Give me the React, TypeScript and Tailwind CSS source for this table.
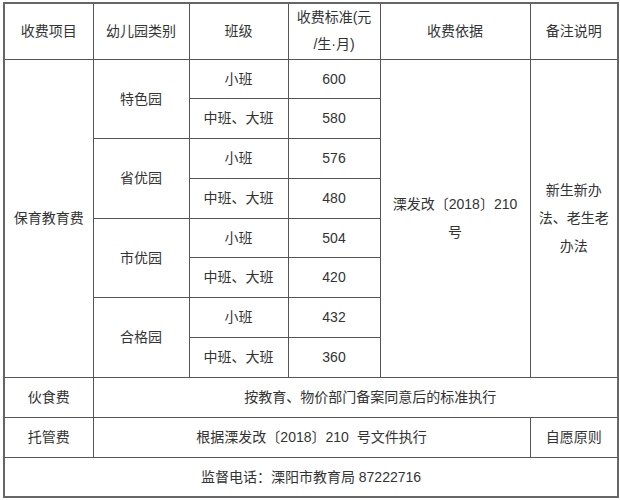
import React from 'react';

const groups = [
  { name: '特色园', small: '600', big: '580' },
  { name: '省优园', small: '576', big: '480' },
  { name: '市优园', small: '504', big: '420' },
  { name: '合格园', small: '432', big: '360' },
];

const cell = 'border border-[#555] text-center align-middle px-2';

export default function App() {
  return (
    <div className="w-[620px] h-[500px] bg-white pl-[3px] pt-[2px] font-['Liberation_Sans','Noto_Sans_CJK_SC',sans-serif] text-[14px] leading-[28px] text-[#333]">
      <table className="w-[614px] table-fixed border-collapse border-2 border-[#666]">
        <colgroup>
          <col className="w-[89px]" />
          <col className="w-[96px]" />
          <col className="w-[99px]" />
          <col className="w-[92px]" />
          <col className="w-[150px]" />
          <col className="w-[88px]" />
        </colgroup>
        <tbody>
          <tr className="h-[56px]">
            <td className={cell}>收费项目</td>
            <td className={cell}>幼儿园类别</td>
            <td className={cell}>班级</td>
            <td className={`${cell} whitespace-nowrap px-1 leading-[27px]`}>
              收费标准(元
              <br />
              /生·月)
            </td>
            <td className={cell}>收费依据</td>
            <td className={cell}>备注说明</td>
          </tr>
          {groups.map((g, i) => (
            <React.Fragment key={g.name}>
              <tr className={i % 2 === 1 ? 'h-[40px]' : 'h-[39px]'}>
                {i === 0 && (
                  <td className={cell} rowSpan={8}>
                    保育教育费
                  </td>
                )}
                <td className={cell} rowSpan={2}>
                  {g.name}
                </td>
                <td className={cell}>小班</td>
                <td className={cell}>{g.small}</td>
                {i === 0 && (
                  <>
                    <td className={cell} rowSpan={8}>
                      溧发改〔2018〕210 号
                    </td>
                    <td className={cell} rowSpan={8}>
                      新生新办法、老生老办法
                    </td>
                  </>
                )}
              </tr>
              <tr className="h-[40px]">
                <td className={cell}>中班、大班</td>
                <td className={cell}>{g.big}</td>
              </tr>
            </React.Fragment>
          ))}
          <tr className="h-[40px]">
            <td className={cell}>伙食费</td>
            <td className={`${cell} pl-[38px]`} colSpan={5}>
              按教育、物价部门备案同意后的标准执行
            </td>
          </tr>
          <tr className="h-[40px]">
            <td className={cell}>托管费</td>
            <td className={`${cell} whitespace-pre`} colSpan={4}>
              根据溧发改〔2018〕210  号文件执行
            </td>
            <td className={cell}>自愿原则</td>
          </tr>
          <tr className="h-[40px]">
            <td className={cell} colSpan={6}>
              监督电话：溧阳市教育局 87222716
            </td>
          </tr>
        </tbody>
      </table>
    </div>
  );
}
